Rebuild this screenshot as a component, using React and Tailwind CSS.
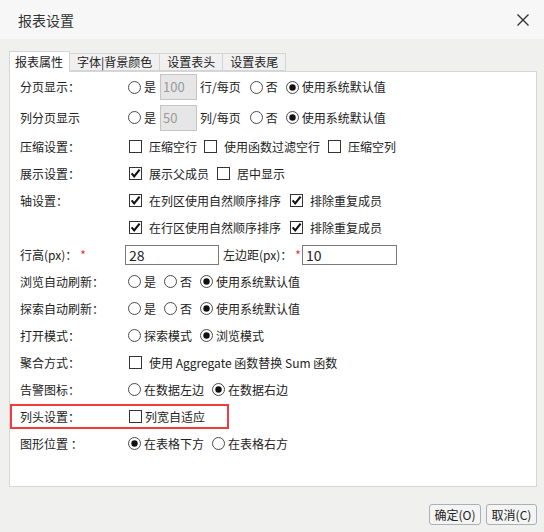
import React from "react";

const Radio = ({ checked }) => (
  <svg width="13" height="13" viewBox="0 0 13 13" className="shrink-0">
    <circle cx="6.5" cy="6.5" r="6" fill="white" stroke="#4a4a4a" strokeWidth="1" />
    {checked && <circle cx="6.5" cy="6.5" r="3.2" fill="#111" />}
  </svg>
);

const Check = ({ checked }) => (
  <svg width="13" height="13" viewBox="0 0 13 13" className="shrink-0">
    <rect x="0.5" y="0.5" width="12" height="12" fill="white" stroke="#333" strokeWidth="1" />
    {checked && (
      <path d="M2.6 6.4 L5.2 9.4 L10.6 2.6" fill="none" stroke="#111" strokeWidth="2.1" />
    )}
  </svg>
);

const RadioItem = ({ checked, children, className = "" }) => (
  <div className={`flex items-center gap-[3px] ${className}`}>
    <Radio checked={checked} />
    <span>{children}</span>
  </div>
);

const CheckItem = ({ checked, children, className = "" }) => (
  <div className={`flex items-center gap-[7px] ${className}`}>
    <div className="ml-[1px] flex">
      <Check checked={checked} />
    </div>
    <span>{children}</span>
  </div>
);

const Row = ({ label, h = "h-[27px]", children }) => (
  <div className={`flex items-center pl-[10px] ${h}`}>
    <div className="w-[108px] shrink-0 whitespace-pre">{label}</div>
    <div className="flex items-center">{children}</div>
  </div>
);

const Star = () => <span className="text-[#e53935] ml-[3px] text-[12px]">*</span>;

export default function App() {
  return (
    <div className="w-[544px] h-[532px] bg-[#f0f0ee] flex flex-col text-[12px] leading-[16px] text-[#222] font-['Noto_Sans_CJK_SC','Microsoft_YaHei',sans-serif] overflow-hidden">
      {/* Title bar */}
      <div className="h-[39px] shrink-0 bg-[#f7f7f7] flex items-center justify-between pl-[18px] pr-[15px]">
        <span className="text-[14px] text-[#333]">报表设置</span>
        <svg width="12" height="12" viewBox="0 0 12 12">
          <path d="M0.5 0.5 L11.5 11.5 M11.5 0.5 L0.5 11.5" stroke="#333" strokeWidth="1.4" fill="none" />
        </svg>
      </div>

      {/* Body */}
      <div className="pl-[9px] pr-[7px] pt-[12px] flex flex-col">
        {/* Tabs */}
        <div className="flex items-end h-[20px]">
          <div className="relative z-10 -mb-px h-[21px] bg-white border border-b-0 border-[#d4d4d4] pl-[5px] pr-[6px] flex items-center">
            报表属性
          </div>
          <div className="h-[18px] bg-[#f0f0f0] border border-l-0 border-[#d4d4d4] px-[7px] flex items-center">
            字体|背景颜色
          </div>
          <div className="h-[18px] bg-[#f0f0f0] border border-l-0 border-[#d4d4d4] px-[7px] flex items-center">
            设置表头
          </div>
          <div className="h-[18px] bg-[#f0f0f0] border border-l-0 border-[#d4d4d4] px-[7px] flex items-center">
            设置表尾
          </div>
        </div>

        {/* Panel */}
        <div className="h-[416px] bg-white border border-[#d6d6d6] flex flex-col">
          <Row label="分页显示：" h="h-[30px]">
            <RadioItem>是</RadioItem>
            <div className="ml-[4px] w-[37px] h-[26px] bg-[#e6e6e6] border border-[#c4c4c4] text-[#9a9a9a] text-[13px] flex items-center pl-[2px]">100</div>
            <span className="ml-[3px]">行/每页</span>
            <RadioItem className="ml-[9px]">否</RadioItem>
            <RadioItem checked className="ml-[8px]">使用系统默认值</RadioItem>
          </Row>
          <Row label="列分页显示" h="h-[31px]">
            <RadioItem>是</RadioItem>
            <div className="ml-[4px] w-[37px] h-[26px] bg-[#e6e6e6] border border-[#c4c4c4] text-[#9a9a9a] text-[13px] flex items-center pl-[2px]">50</div>
            <span className="ml-[3px]">列/每页</span>
            <RadioItem className="ml-[9px]">否</RadioItem>
            <RadioItem checked className="ml-[8px]">使用系统默认值</RadioItem>
          </Row>
          <Row label="压缩设置：">
            <CheckItem>压缩空行</CheckItem>
            <CheckItem className="ml-[6px]">使用函数过滤空行</CheckItem>
            <CheckItem className="ml-[7px]">压缩空列</CheckItem>
          </Row>
          <Row label="展示设置：">
            <CheckItem checked>展示父成员</CheckItem>
            <CheckItem className="ml-[7px]">居中显示</CheckItem>
          </Row>
          <Row label="轴设置：">
            <CheckItem checked>在列区使用自然顺序排序</CheckItem>
            <CheckItem checked className="ml-[8px]">排除重复成员</CheckItem>
          </Row>
          <Row label="">
            <CheckItem checked>在行区使用自然顺序排序</CheckItem>
            <CheckItem checked className="ml-[8px]">排除重复成员</CheckItem>
          </Row>
          <div className="flex items-center pl-[10px] h-[27px]">
            <div className="w-[105px] shrink-0 flex items-center">
              行高(px)：<Star />
            </div>
            <div className="w-[94px] h-[20px] border border-[#7a7a7a] bg-white text-[14px] flex items-center pl-[3px]">28</div>
            <div className="ml-[4px] flex items-center">
              左边距(px)：<Star />
            </div>
            <div className="ml-[1px] w-[95px] h-[20px] border border-[#7a7a7a] bg-white text-[14px] flex items-center pl-[3px]">10</div>
          </div>
          <Row label="浏览自动刷新：">
            <RadioItem>是</RadioItem>
            <RadioItem className="ml-[8px]">否</RadioItem>
            <RadioItem checked className="ml-[8px]">使用系统默认值</RadioItem>
          </Row>
          <Row label="探索自动刷新：">
            <RadioItem>是</RadioItem>
            <RadioItem className="ml-[8px]">否</RadioItem>
            <RadioItem checked className="ml-[8px]">使用系统默认值</RadioItem>
          </Row>
          <Row label="打开模式：">
            <RadioItem>探索模式</RadioItem>
            <RadioItem checked className="ml-[8px]">浏览模式</RadioItem>
          </Row>
          <Row label="聚合方式：">
            <CheckItem>使用 Aggregate 函数替换 Sum 函数</CheckItem>
          </Row>
          <Row label="告警图标：">
            <RadioItem>在数据左边</RadioItem>
            <RadioItem checked className="ml-[8px]">在数据右边</RadioItem>
          </Row>
          <div className="flex items-center h-[27px]">
            <div className="w-[219px] h-[25px] border-2 border-[#f03c3c] flex items-center pl-[8px]">
              <div className="w-[108px] shrink-0">列头设置：</div>
              <div className="flex items-center gap-[3px]">
                <div className="ml-[1px] flex">
                  <Check />
                </div>
                <span>列宽自适应</span>
              </div>
            </div>
          </div>
          <Row label="图形位置 ：">
            <RadioItem checked>在表格下方</RadioItem>
            <RadioItem className="ml-[8px]">在表格右方</RadioItem>
          </Row>
        </div>

        {/* Buttons */}
        <div className="mt-[17px] flex justify-end gap-[5px]">
          <button className="w-[52px] h-[21px] rounded-[3px] border border-[#a9b0b8] bg-[#f4f4f4] text-[12px] text-[#222] flex items-center justify-center">
            确定(O)
          </button>
          <button className="w-[51px] h-[21px] rounded-[3px] border border-[#a9b0b8] bg-[#f4f4f4] text-[12px] text-[#222] flex items-center justify-center">
            取消(C)
          </button>
        </div>
      </div>
    </div>
  );
}
